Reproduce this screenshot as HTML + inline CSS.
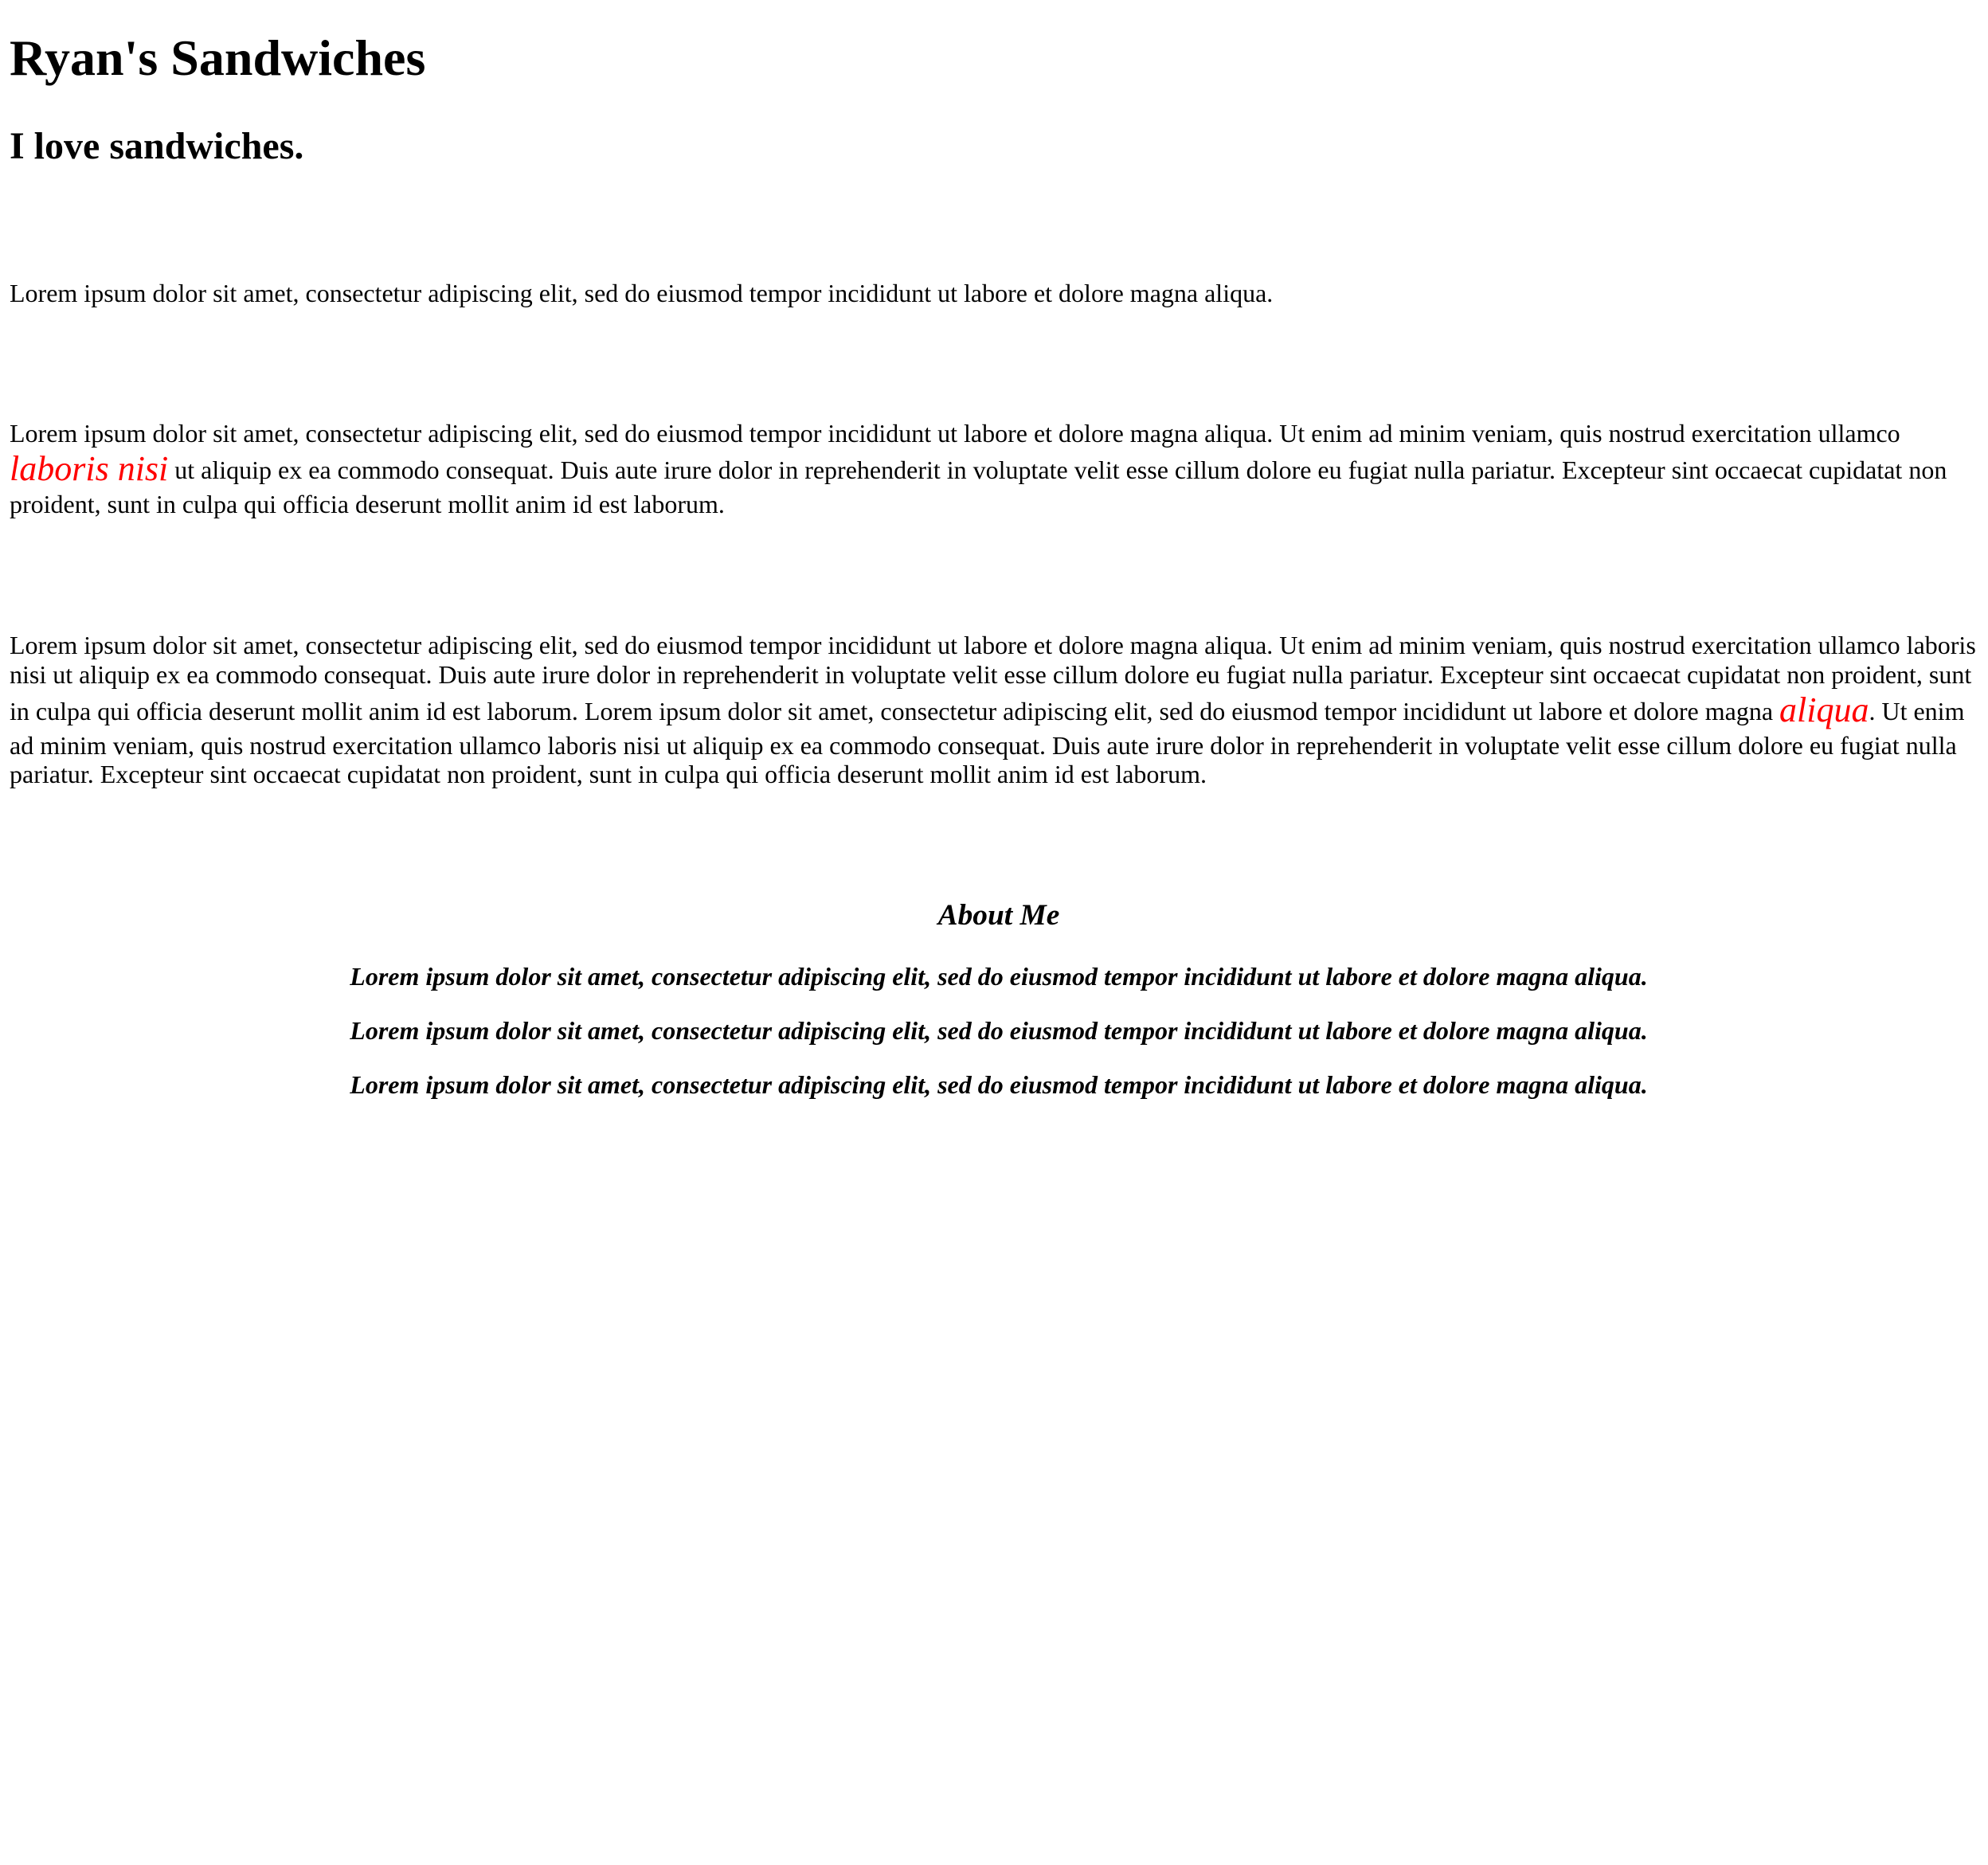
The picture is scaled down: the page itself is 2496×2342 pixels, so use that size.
<!DOCTYPE html>
<html><head><meta charset="utf-8">
<style>
html{zoom:2;background:#fff}
body{margin:0;font-family:"Liberation Serif",serif;color:#000;position:relative;height:1171px;overflow:hidden}
.b{position:absolute;left:6px;width:1245px;margin:0}
h1{font-size:32px;font-weight:bold;line-height:37px}
h2{font-size:24px;font-weight:bold;line-height:28px}
p{font-size:16px;line-height:18.4px}
.r{color:red;font-style:italic;font-size:22px;font-family:"Liberation Serif",serif;font-weight:normal;line-height:26px;vertical-align:-1px}
.c{text-align:center;font-weight:bold;font-style:italic;left:11px;width:1232px}
h3{font-size:18.7px;line-height:22px}
</style></head><body>
<h1 class="b" style="top:18px">Ryan's Sandwiches</h1>
<h2 class="b" style="top:78px">I love sandwiches.</h2>
<p class="b" style="top:175px">Lorem ipsum dolor sit amet, consectetur adipiscing elit, sed do eiusmod tempor incididunt ut labore et dolore magna aliqua.</p>
<p class="b" style="top:263px">Lorem ipsum dolor sit amet, consectetur adipiscing elit, sed do eiusmod tempor incididunt ut labore et dolore magna aliqua. Ut enim ad minim veniam, quis nostrud exercitation ullamco <span class="r">laboris nisi</span> ut aliquip ex ea commodo consequat. Duis aute irure dolor in reprehenderit in voluptate velit esse cillum dolore eu fugiat nulla pariatur. Excepteur sint occaecat cupidatat non proident, sunt in culpa qui officia deserunt mollit anim id est laborum.</p>
<p class="b" style="top:396px">Lorem ipsum dolor sit amet, consectetur adipiscing elit, sed do eiusmod tempor incididunt ut labore et dolore magna aliqua. Ut enim ad minim veniam, quis nostrud exercitation ullamco laboris nisi ut aliquip ex ea commodo consequat. Duis aute irure dolor in reprehenderit in voluptate velit esse cillum dolore eu fugiat nulla pariatur. Excepteur sint occaecat cupidatat non proident, sunt in culpa qui officia deserunt mollit anim id est laborum. Lorem ipsum dolor sit amet, consectetur adipiscing elit, sed do eiusmod tempor incididunt ut labore et dolore magna <span class="r">aliqua</span>. Ut enim ad minim veniam, quis nostrud exercitation ullamco laboris nisi ut aliquip ex ea commodo consequat. Duis aute irure dolor in reprehenderit in voluptate velit esse cillum dolore eu fugiat nulla pariatur. Excepteur sint occaecat cupidatat non proident, sunt in culpa qui officia deserunt mollit anim id est laborum.</p>
<h3 class="b c" style="top:564px">About Me</h3>
<p class="b c" style="top:604px">Lorem ipsum dolor sit amet, consectetur adipiscing elit, sed do eiusmod tempor incididunt ut labore et dolore magna aliqua.</p>
<p class="b c" style="top:638px">Lorem ipsum dolor sit amet, consectetur adipiscing elit, sed do eiusmod tempor incididunt ut labore et dolore magna aliqua.</p>
<p class="b c" style="top:672px">Lorem ipsum dolor sit amet, consectetur adipiscing elit, sed do eiusmod tempor incididunt ut labore et dolore magna aliqua.</p>
</body></html>
